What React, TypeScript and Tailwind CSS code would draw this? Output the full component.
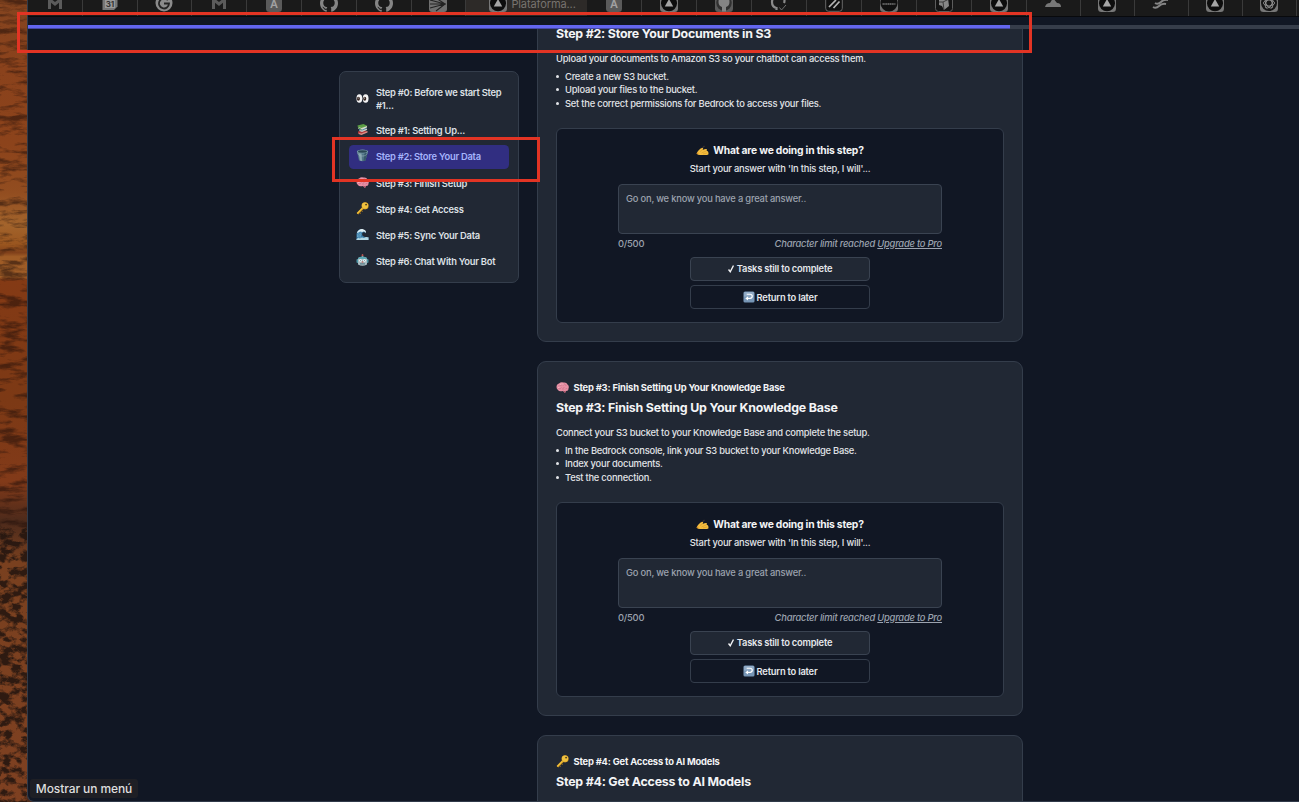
import React from "react";
import { SiGithub } from "react-icons/si";

type EmojiName = "eyes" | "books" | "bucket" | "brain" | "key" | "wave" | "robot" | "hand" | "return";

function Emoji({ name, className = "h-[13px] w-[13px]" }: { name: EmojiName; className?: string }) {
  return (
    <svg viewBox="0 0 26 26" className={`shrink-0 ${className}`}>
      {name === "eyes" && (
        <g>
          <ellipse cx="6.7" cy="13" rx="5.8" ry="8.5" fill="#f4f4f4" />
          <ellipse cx="19.3" cy="13" rx="5.8" ry="8.5" fill="#f4f4f4" />
          <ellipse cx="4.8" cy="13.5" rx="3.1" ry="4.2" fill="#352520" />
          <ellipse cx="17.4" cy="13.5" rx="3.1" ry="4.2" fill="#352520" />
          <circle cx="4.3" cy="11.8" r="1" fill="#fff" />
          <circle cx="16.9" cy="11.8" r="1" fill="#fff" />
        </g>
      )}
      {name === "books" && (
        <g>
          <path d="M4 17l13-3 6 4-12 5-7-2z" fill="#b3393c" />
          <path d="M6 20l5 1 12-5v3l-12 5-6-2z" fill="#d98e86" />
          <path d="M7 11l11-2 5 4-11 4-6-2z" fill="#3d83a5" />
          <path d="M7 14l5 1 10-4v3l-10 4-5-2z" fill="#cfc9c0" />
          <path d="M3 5l12-3 8 4-12 5-7-2z" fill="#5d9f45" />
          <path d="M4 8l7 2 11-4v3l-11 5-7-3z" fill="#d8dccb" />
          <path d="M4 5v5l7 4v-2l-6-3z" fill="#397731" />
        </g>
      )}
      {name === "bucket" && (
        <g>
          <path d="M2 5l4 18q7 3 13 0l5-18z" fill="#527587" />
          <path d="M5 8l3 15 4 1-1-15z" fill="#88a6b0" />
          <path d="M17 8l-2 16 4-1 4-15z" fill="#36586a" />
          <ellipse cx="13" cy="5" rx="11.3" ry="3.8" fill="#7498a7" />
          <ellipse cx="13" cy="5" rx="9" ry="2.4" fill="#294654" />
          <path d="M3 7q2 8 11 7t8-7" fill="none" stroke="#9bb4bc" strokeWidth="1" />
        </g>
      )}
      {name === "brain" && (
        <g>
          <path d="M1 12q0-6 5-7 4-4 9-2 6-1 8 4 4 3 2 8 0 5-5 5l-2 4-4-4q-8 2-10-2-3-2-3-6z" fill="#e790a4" />
          <path d="M5 10q3-3 6-1m0-4q1 4 5 3m1-3q0 4 4 4M5 15q4 2 6-2m3 5q-2-5 3-5m1 4q2-4 5-1" fill="none" stroke="#c26c85" strokeWidth="1.2" />
          <path d="M7 8q4-4 8-1M4 13h3" fill="none" stroke="#ffc5cc" strokeWidth="1.2" />
          <path d="M14 19q4 2 6 0l-2 5z" fill="#a95168" />
        </g>
      )}
      {name === "key" && (
        <g>
          <path d="M14.5 11.5L3 23.5" stroke="#b98116" strokeWidth="5" />
          <path d="M14 11.5L2.5 23" stroke="#efc13e" strokeWidth="3" />
          <path d="M6 20l3 3m1-7l3 3" stroke="#c18a1d" strokeWidth="2" />
          <circle cx="18.2" cy="7.7" r="7.1" fill="#c88e20" />
          <circle cx="18" cy="7.3" r="6.2" fill="#efc13e" />
          <circle cx="20.2" cy="5.2" r="1.9" fill="#4d3b1e" />
        </g>
      )}
      {name === "wave" && (
        <g>
          <path d="M1 24V12Q3 1 13 3q7 2 6 8-2-4-6-2-3 7 5 9 4 2 7 0v6z" fill="#397ba7" />
          <path d="M3 18Q3 6 12 6m-6 15Q4 12 11 9m0 13q-5-6-1-10" stroke="#79b5d3" strokeWidth="1.4" fill="none" />
          <path d="M2 9Q6 1 13 2q8 2 7 8-5-5-8-1-1-4-9 1z" fill="#e3f2f6" />
          <path d="M1 22q4-3 7-1 4-3 8-1 4-3 9-1v5H1z" fill="#b3d8e4" />
        </g>
      )}
      {name === "robot" && (
        <g>
          <path d="M13 1v6" stroke="#95a5a9" strokeWidth="2" />
          <circle cx="13" cy="2.5" r="2" fill="#c14e4b" />
          <rect x="1" y="10" width="4" height="8" rx="2" fill="#4d96a5" />
          <rect x="21" y="10" width="4" height="8" rx="2" fill="#4d96a5" />
          <path d="M4 8q9-6 18 0v13q-9 5-18 0z" fill="#a9bdc2" />
          <path d="M4 8q9-6 18 0v2H4z" fill="#5ba7b4" />
          <circle cx="9" cy="13" r="2.7" fill="#f5faf8" />
          <circle cx="17" cy="13" r="2.7" fill="#f5faf8" />
          <circle cx="9" cy="13" r="1" fill="#6b8f98" />
          <circle cx="17" cy="13" r="1" fill="#6b8f98" />
          <path d="M13 14l-2 3h4z" fill="#c84d42" />
          <rect x="8" y="18.5" width="10" height="2.5" fill="#5d8089" />
        </g>
      )}
      {name === "hand" && (
        <g>
          <path d="M9 11L17 4" stroke="#3b3331" strokeWidth="2.2" />
          <path d="M1 19q2-5 7-9 3-3 6-2 1 1-1 4 6-3 8-2 2 1 0 3 4 1 4 5 1 4-3 4H8q-4 0-7-3z" fill="#f5bd3e" />
          <path d="M8 15l5-3m-2 6l9-4m-6 6l8-2" stroke="#cf9427" strokeWidth="1" fill="none" />
          <path d="M1 19q2-2 4-2l-1 4z" fill="#d88d28" />
        </g>
      )}
      {name === "return" && (
        <g>
          <rect x="1" y="1" width="24" height="24" rx="3.5" fill="#7796b6" />
          <path d="M3 2h20l1 10H2z" fill="#91abc6" />
          <path d="M8 7h7q5 0 5 4.5T15 16H9" fill="none" stroke="#fff" strokeWidth="2.6" />
          <path d="M11 11.5v9L5 16z" fill="#fff" />
        </g>
      )}
    </svg>
  );
}

type TabIcon = "gmail" | "calendar" | "g" | "a" | "octo" | "rays" | "tri" | "cat" | "check" | "slashes" | "oval" | "cube" | "cloud" | "waves" | "knot";

function Favicon({ name }: { name: TabIcon }) {
  if (name === "octo") return <SiGithub className="-mt-[6px] h-[18px] w-[18px] shrink-0 text-[#858585]" />;
  return (
    <svg viewBox="0 0 18 18" className="-mt-[6px] h-[18px] w-[18px] shrink-0">
      {name === "gmail" && <path d="M3.5 15V5.5L9 10l5.5-4.5V15" fill="none" stroke="#5b5b5b" strokeWidth="3" />}
      {name === "calendar" && (
        <g>
          <path d="M1.5 1h15v11.5L13 16H1.5z" fill="#777" />
          <rect x="4" y="5" width="10" height="9" fill="#999" />
          <text x="9" y="13" textAnchor="middle" fontFamily="Inter, sans-serif" fontSize="8" fontWeight="700" fill="#333">31</text>
        </g>
      )}
      {name === "g" && (
        <g>
          <circle cx="9" cy="9" r="8.5" fill="#8b8b8b" />
          <path d="M12.8 6.2A5 5 0 1 0 14 9.5H9" fill="none" stroke="#242424" strokeWidth="1.8" />
        </g>
      )}
      {name === "a" && (
        <g>
          <rect x="1" y="0" width="16" height="18" rx="3.5" fill="#5a5a5a" />
          <text x="9" y="14" textAnchor="middle" fontFamily="Inter, sans-serif" fontSize="11" fontWeight="600" fill="#a2a2a2">A</text>
        </g>
      )}
      {name === "rays" && (
        <g>
          <rect x="0" y="0" width="18" height="18" rx="3" fill="#707070" />
          <path d="M1 10h16M1 6l15 4L4 2m12 8L1 14m15-4L7 17" stroke="#222" strokeWidth="1.1" fill="none" />
        </g>
      )}
      {name === "tri" && (
        <g>
          <rect x="0" y="0" width="18" height="18" rx="3.5" fill="#777" />
          <circle cx="9" cy="9.3" r="8" fill="#0d0d0d" />
          <path d="M9 5l4.2 7.5H4.8z" fill="#a5a5a5" />
        </g>
      )}
      {name === "cat" && (
        <g>
          <rect x="0" y="0" width="18" height="18" rx="3.5" fill="#5a5a5a" />
          <circle cx="9" cy="9" r="7.7" fill="#303030" />
          <path d="M3.5 8q0-6 5.5-6t5.5 6q0 4-3.5 5v4.5H7V13q-3.500-1-3.500-5z" fill="#858585" />
        </g>
      )}
      {name === "check" && (
        <g>
          <path d="M6.500 16v-2Q2 13 2 8q0-5 6-6M14 9q1-2 0-5" fill="none" stroke="#8b8b8b" strokeWidth="2.2" />
          <path d="M9.500 13.500l2 2.500 4.500-5" fill="none" stroke="#6e6e6e" strokeWidth="1" />
        </g>
      )}
      {name === "slashes" && (
        <g>
          <rect x=".7" y=".7" width="16.6" height="16.600" rx="3" fill="#111" stroke="#686868" />
          <path d="M4 13L11 6M8.500 14l6-6.500" stroke="#b5b5b5" strokeWidth="1.700" />
        </g>
      )}
      {name === "oval" && (
        <g>
          <rect x="0" y="0" width="18" height="18" rx="3.5" fill="#707070" />
          <circle cx="9" cy="9" r="8.6" fill="#101010" />
          <path d="M2.500 10h13" stroke="#777" strokeWidth="1.300" strokeDasharray="1.400 .4" />
        </g>
      )}
      {name === "cube" && (
        <g>
          <rect x=".5" y=".5" width="17" height="17" rx="3" fill="#141414" stroke="#5d5d5d" />
          <path d="M4 5l9-1 1 8-5 4-2-4-3-1z" fill="#888" />
          <path d="M4 8h4l1 8M8 8l6-3" stroke="#3c3c3c" fill="none" />
        </g>
      )}
      {name === "cloud" && <path d="M1 13q1-4 5-4l3-5 4 5q4 0 4 4z" fill="#777" />}
      {name === "waves" && (
        <path d="M3 9q3 2 6-1t7-2M1 13q3 2 6-1t7-2" fill="none" stroke="#858585" strokeWidth="1.9" />
      )}
      {name === "knot" && (
        <g>
          <rect x="0" y="0" width="18" height="18" rx="3.5" fill="#777" />
          <circle cx="9" cy="9" r="8" fill="#151515" />
          <g fill="none" stroke="#969696" strokeWidth=".9">
            <ellipse cx="9" cy="9" rx="5.5" ry="3" />
            <ellipse cx="9" cy="9" rx="5.5" ry="3" transform="rotate(60 9 9)" />
            <ellipse cx="9" cy="9" rx="5.5" ry="3" transform="rotate(120 9 9)" />
          </g>
        </g>
      )}
    </svg>
  );
}

const leftTabs: TabIcon[] = ["gmail", "calendar", "g", "gmail", "a", "octo", "octo", "rays"];
const middleTabs: TabIcon[] = ["a", "tri", "cat", "check", "slashes", "oval", "cube", "tri"];
const rightTabs: TabIcon[] = ["cloud", "tri", "waves", "tri", "knot"];

function Tab({ icon, className }: { icon: TabIcon; className: string }) {
  return (
    <div className={`flex shrink-0 items-start justify-center border-r border-[#3a3a3a] ${className}`}>
      <Favicon name={icon} />
    </div>
  );
}

function TabStrip() {
  return (
    <div className="flex h-[17px] shrink-0 overflow-hidden border-b border-[#08090c] bg-[#1a1a1a]">
      {leftTabs.map((t, i) => (
        <Tab key={i} icon={t} className="w-[54.8px]" />
      ))}
      <div className="flex w-[121px] shrink-0 items-start gap-[4px] bg-[#2d2a28] pl-[23px]">
        <Favicon name="tri" />
        <span className="-mt-[4px] text-[11px] leading-[16px] tracking-[-0.1px] whitespace-nowrap text-[#77736f]">Plataforma...</span>
      </div>
      {middleTabs.map((t, i) => (
        <Tab key={i} icon={t} className="w-[54.9px]" />
      ))}
      {rightTabs.map((t, i) => (
        <Tab key={i} icon={t} className="w-[54px]" />
      ))}
    </div>
  );
}

function Wallpaper() {
  return (
    <svg className="h-full w-[27px] shrink-0" viewBox="0 0 27 802" preserveAspectRatio="none">
      <defs>
        <linearGradient id="rock" x1="0" y1="0" x2="0" y2="1">
          <stop offset="0" stopColor="#84441f" />
          <stop offset=".08" stopColor="#8a421c" />
          <stop offset=".18" stopColor="#8c431b" />
          <stop offset=".24" stopColor="#924d20" />
          <stop offset=".28" stopColor="#a3642c" />
          <stop offset=".305" stopColor="#99551f" />
          <stop offset=".315" stopColor="#80401a" />
          <stop offset=".32" stopColor="#9f5c26" />
          <stop offset=".345" stopColor="#9d5c27" />
          <stop offset=".35" stopColor="#843a15" />
          <stop offset=".5" stopColor="#7c3915" />
          <stop offset=".6" stopColor="#823a19" />
          <stop offset=".65" stopColor="#4c2a1b" />
          <stop offset=".7" stopColor="#79401f" />
          <stop offset="1" stopColor="#7e4021" />
        </linearGradient>
        <filter id="strata" x="0" y="0" width="100%" height="100%" colorInterpolationFilters="sRGB">
          <feTurbulence type="fractalNoise" baseFrequency=".04 .14" numOctaves="5" seed="8" />
          <feColorMatrix values="0 0 0 0 .13  0 0 0 0 .06  0 0 0 0 .04  4 0 0 0 -1.9" />
        </filter>
        <filter id="rubble" x="0" y="0" width="100%" height="100%" colorInterpolationFilters="sRGB">
          <feTurbulence type="fractalNoise" baseFrequency=".09 .13" numOctaves="5" seed="21" />
          <feColorMatrix values="0 0 0 0 .13  0 0 0 0 .08  0 0 0 0 .06  5 0 0 0 -2.1" />
        </filter>
      </defs>
      <rect width="27" height="802" fill="url(#rock)" />
      <rect width="27" height="530" filter="url(#strata)" opacity=".55" />
      <rect y="525" width="27" height="277" filter="url(#rubble)" opacity=".85" />
    </svg>
  );
}

const steps: { icon: EmojiName; label: string }[] = [
  { icon: "books", label: "Step #1: Setting Up..." },
  { icon: "bucket", label: "Step #2: Store Your Data" },
  { icon: "brain", label: "Step #3: Finish Setup" },
  { icon: "key", label: "Step #4: Get Access" },
  { icon: "wave", label: "Step #5: Sync Your Data" },
  { icon: "robot", label: "Step #6: Chat With Your Bot" },
];

function Sidebar() {
  return (
    <nav className="mt-[42px] h-[212px] w-[180px] shrink-0 rounded-[7px] border border-[#343d4b] bg-[#212834] px-[9px] pt-[9px] text-[9.33px] font-semibold tracking-[-0.23px] text-[#dde0e5]">
      <div className="mb-[2.5px] flex h-[35px] items-center gap-[7px] pl-[7px]">
        <Emoji name="eyes" />
        <span className="leading-[13px]">Step #0: Before we start Step<br />#1...</span>
      </div>
      <ul className="flex flex-col gap-[2.25px]">
        {steps.map((s, i) => (
          <li
            key={s.label}
            className={`flex h-[24px] items-center gap-[7px] rounded-[4.5px] pl-[7px] whitespace-nowrap ${i === 1 ? "bg-[#312e81] text-[#a5b4fc]" : ""}`}
          >
            <Emoji name={s.icon} className="mb-[2px] h-[13px] w-[13px]" />
            <span className="pt-[1px]">{s.label}</span>
          </li>
        ))}
      </ul>
    </nav>
  );
}

function AnswerBox() {
  return (
    <div className="mt-[18px] flex h-[195px] flex-col items-center rounded-[6px] border border-[#343d4b] bg-[#111724] pt-[13px]">
      <div className="flex h-[16px] items-center gap-[4px] text-[10.3px] font-bold tracking-[-0.2px] whitespace-nowrap text-[#f3f4f6]">
        <Emoji name="hand" />
        <span className="pt-[1px]">What are we doing in this step?</span>
      </div>
      <p className="mt-[4px] text-[9.33px] leading-[14px] font-medium tracking-[-0.2px] text-[#e2e4e8]">Start your answer with 'In this step, I will'...</p>
      <div className="mt-[8px] h-[50px] w-[324px] rounded-[4px] border border-[#3a4351] bg-[#212834] px-[7px] pt-[7px] text-[9.33px] leading-[14px] tracking-[-0.19px] text-[#9ca3af]">
        Go on, we know you have a great answer..
      </div>
      <div className="mt-[2.5px] flex h-[14px] w-[324px] items-center justify-between text-[9.33px] text-[#9ca3af]">
        <span>0/500</span>
        <span className="tracking-[-0.21px] italic">Character limit reached <span className="underline">Upgrade to Pro</span></span>
      </div>
      <button className="mt-[6px] flex h-[24px] w-[180px] items-center justify-center gap-[3px] rounded-[4px] border border-[#3a4351] bg-[#212834] text-[9.33px] font-semibold tracking-[-0.2px] text-[#e5e7eb]">
        <svg viewBox="0 0 12 16" className="h-[8px] w-[6px]"><path d="M1 9l3.5 4.5L11 1" fill="none" stroke="#f3f4f6" strokeWidth="2.8" /></svg>
        <span>Tasks still to complete</span>
      </button>
      <button className="mt-[4.5px] flex h-[24px] w-[180px] items-center justify-center gap-[2px] rounded-[4px] border border-[#343d4b] text-[9.33px] font-semibold tracking-[-0.2px] text-[#e5e7eb]">
        <Emoji name="return" className="h-[12px] w-[12px]" />
        <span className="pt-[1px]">Return to later</span>
      </button>
    </div>
  );
}

interface StepCardProps {
  icon: EmojiName;
  caption?: string;
  title: string;
  intro?: string;
  items: string[];
}

function StepCard({ icon, caption, title, intro, items }: StepCardProps) {
  return (
    <section className="h-[355px] shrink-0 rounded-[9px] border border-[#343d4b] bg-[#212834] px-[18px] pt-[17px] text-[9.33px] font-medium tracking-[-0.215px] text-[#e2e4e8]">
      <div className="flex h-[16px] items-center gap-[4px] font-bold tracking-[-0.17px] text-[#f3f4f6]">
        <Emoji name={icon} />
        {caption && <span className="pt-[1px] pl-[0.5px]">{caption}</span>}
      </div>
      <h2 className="mt-[4px] text-[12.4px] leading-[18px] font-bold tracking-[-0.2px] text-[#f3f4f6]">{title}</h2>
      {intro && <p className="mt-[9px] leading-[14px]">{intro}</p>}
      <ul className="mt-[3.5px] leading-[13.5px]">
        {items.map((t) => (
          <li key={t} className="flex items-center gap-[6px]">
            <i className="h-[3px] w-[3px] rounded-full bg-[#e2e4e8]" />
            <span>{t}</span>
          </li>
        ))}
      </ul>
      {items.length > 0 && <AnswerBox />}
    </section>
  );
}

export default function App() {
  return (
    <div className="relative flex h-[802px] w-[1299px] overflow-hidden bg-[#4d2a1b] font-['Inter',sans-serif]">
      <Wallpaper />
      <div className="flex min-w-0 flex-1 flex-col overflow-hidden rounded-bl-[7px] border-b border-l border-[#303a49] bg-[#111724]">
        <TabStrip />
        <div className="mt-[8px] h-[4px] shrink-0 bg-[#363d4a]">
          <div className="h-full w-[982px] border-b border-[#4549a5] bg-[#6366f1]" />
        </div>
        <main className="flex min-h-0 flex-1 items-start gap-[18px] overflow-hidden pl-[311px]">
          <Sidebar />
          <div className="-mt-[42px] flex w-[486px] shrink-0 flex-col gap-[19px]">
            <StepCard
              icon="bucket"
              title="Step #2: Store Your Documents in S3"
              intro="Upload your documents to Amazon S3 so your chatbot can access them."
              items={["Create a new S3 bucket.", "Upload your files to the bucket.", "Set the correct permissions for Bedrock to access your files."]}
            />
            <StepCard
              icon="brain"
              caption="Step #3: Finish Setting Up Your Knowledge Base"
              title="Step #3: Finish Setting Up Your Knowledge Base"
              intro="Connect your S3 bucket to your Knowledge Base and complete the setup."
              items={["In the Bedrock console, link your S3 bucket to your Knowledge Base.", "Index your documents.", "Test the connection."]}
            />
            <StepCard
              icon="key"
              caption="Step #4: Get Access to AI Models"
              title="Step #4: Get Access to AI Models"
              items={[]}
            />
          </div>
        </main>
      </div>
      <div className="absolute top-[12px] left-[17px] h-[41px] w-[1015px] border-3 border-[#e23424]" />
      <div className="absolute top-[137px] left-[332px] h-[45px] w-[208px] border-3 border-[#e23424]" />
      <div className="absolute top-[779px] left-[30px] flex h-[19px] w-[108px] items-center justify-center rounded-[3px] bg-[#1e1f25] pt-[1px] text-[12px] font-medium tracking-[-0.1px] whitespace-nowrap text-[#dedede]">
        Mostrar un menú
      </div>
    </div>
  );
}
